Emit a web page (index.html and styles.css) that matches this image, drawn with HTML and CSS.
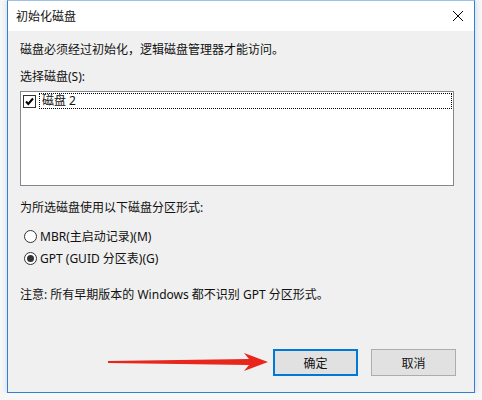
FILE: index.html
```html
<!DOCTYPE html>
<html lang="zh-CN">
<head>
<meta charset="UTF-8">
<title>初始化磁盘</title>
<link rel="stylesheet" href="styles.css">
</head>
<body>
<div class="window">
    <div class="titlebar">
        <span class="title">初始化磁盘</span>
        <svg class="close" width="12" height="12" viewBox="0 0 12 12">
            <path d="M1 1L11 11M11 1L1 11" stroke="#000" stroke-width="1" fill="none"/>
        </svg>
    </div>
    <div class="content">
        <p class="line">磁盘必须经过初始化，逻辑磁盘管理器才能访问。</p>
        <p class="line select-label">选择磁盘(S):</p>
        <div class="listbox">
            <div class="list-item">
                <span class="checkbox">
                    <svg width="11" height="11" viewBox="0 0 11 11">
                        <path d="M2 5.5L4.3 8L9 2.5" stroke="#000" stroke-width="2" fill="none"/>
                    </svg>
                </span>
                <span class="item-text">磁盘 2</span>
            </div>
        </div>
        <p class="line style-label">为所选磁盘使用以下磁盘分区形式:</p>
        <div class="radio-row">
            <span class="radio"></span>
            <span>MBR(主启动记录)(M)</span>
        </div>
        <div class="radio-row">
            <span class="radio checked"></span>
            <span>GPT (GUID 分区表)(G)</span>
        </div>
        <p class="line note">注意: 所有早期版本的 Windows 都不识别 GPT 分区形式。</p>
        <div class="buttons">
            <button class="btn default">确定</button>
            <button class="btn">取消</button>
        </div>
    </div>
</div>

<!-- red pointer drawn over the dialog -->
<svg class="arrow" width="482" height="400" viewBox="0 0 482 400">
    <polygon points="108,361 249,359 244,353 268,362 244,371 249,365 108,363" fill="#e8261c"/>
</svg>
</body>
</html>
```

FILE: styles.css
```css
body {
    margin: 0;
    padding: 0;
    background-color: #f7f7f7;
    font-family: "Noto Sans", "Noto Sans CJK SC", sans-serif;
    font-size: 12px;
    color: #111;
}
.window {
    margin-left: 7px;
    width: 466px;
    height: 391px;
    border: 1px solid #2f7fd3;
    border-top-color: #9ec3ea;
    background-color: #f0f0f0;
    box-shadow: 0 0 6px rgba(120, 150, 190, 0.35);
}
.titlebar {
    height: 30px;
    background-color: #fff;
    display: flex;
    align-items: center;
    justify-content: space-between;
    padding: 0 10px 0 8px;
}
.title {
    line-height: 17px;
}
.close {
    display: block;
}
.content {
    padding: 10px 18px 0 12px;
}
.line {
    margin: 0;
    line-height: 17px;
}
.select-label {
    margin-top: 10px;
}
.listbox {
    margin-top: 6px;
    width: 432px;
    height: 93px;
    border: 1px solid #828790;
    background-color: #fff;
}
.list-item {
    display: flex;
    align-items: center;
    padding: 1px 0 0 2px;
}
.checkbox {
    width: 11px;
    height: 11px;
    border: 1px solid #333;
    background-color: #fff;
    display: flex;
}
.item-text {
    flex: 1;
    margin-left: 3px;
    margin-right: 1px;
    line-height: 14px;
    padding-left: 2px;
    border: 1px dotted #000;
}
.style-label {
    margin-top: 13px;
}
.radio-row {
    display: flex;
    align-items: center;
    height: 22px;
    padding-left: 4px;
}
.style-label + .radio-row {
    margin-top: 9px;
}
.radio {
    width: 11px;
    height: 11px;
    border: 1px solid #333;
    border-radius: 50%;
    background-color: #fff;
    margin-right: 3px;
    display: flex;
    align-items: center;
    justify-content: center;
}
.radio.checked::after {
    content: "";
    width: 7px;
    height: 7px;
    border-radius: 50%;
    background-color: #333;
}
.note {
    margin-top: 17px;
}
.buttons {
    display: flex;
    justify-content: flex-end;
    gap: 13px;
    margin-top: 46px;
}
.btn {
    width: 85px;
    height: 27px;
    border: 1px solid #adadad;
    background-color: #e1e1e1;
    font-family: inherit;
    font-size: 12px;
    color: #111;
    padding: 0;
}
.btn.default {
    border: 2px solid #0078d7;
}
.arrow {
    position: absolute;
    left: 0;
    top: 0;
    pointer-events: none;
}
```
